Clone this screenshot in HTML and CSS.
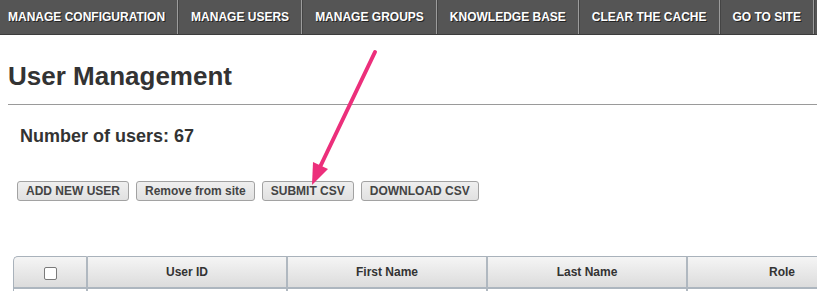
FILE: index.html
```html
<!DOCTYPE html>
<html>
<head>
<title>User Management</title>
<meta charset="UTF-8">
<link rel="stylesheet" href="styles.css">
</head>

<body>
<div class="nav">
    <a class="nav-item first">MANAGE CONFIGURATION</a>
    <a class="nav-item">MANAGE USERS</a>
    <a class="nav-item">MANAGE GROUPS</a>
    <a class="nav-item">KNOWLEDGE BASE</a>
    <a class="nav-item">CLEAR THE CACHE</a>
    <a class="nav-item">GO TO SITE</a>
</div>

<div class="main">
    <h1 class="title">User Management</h1>
    <hr class="rule">

    <div class="count">Number of users: 67</div>

    <div class="actions">
        <button class="btn">ADD NEW USER</button>
        <button class="btn">Remove from site</button>
        <button class="btn">SUBMIT CSV</button>
        <button class="btn">DOWNLOAD CSV</button>
    </div>

    <div class="grid-wrap">
    <table class="grid">
    <tr class="head">
        <th class="col-check"><input type="checkbox" class="check"></th>
        <th class="col">User ID</th>
        <th class="col">First Name</th>
        <th class="col">Last Name</th>
        <th class="col-role">Role</th>
    </tr>
    <tr class="row">
        <td></td><td></td><td></td><td></td><td></td>
    </tr>
    </table>
    </div>
</div>

<!-- annotation arrow pointing at SUBMIT CSV -->
<svg class="arrow" width="817" height="291" viewBox="0 0 817 291">
    <line x1="375" y1="52" x2="320" y2="167" stroke="#ec2f7b" stroke-width="4" stroke-linecap="round"/>
    <polygon points="312,185 313,162 328,169" fill="#ec2f7b"/>
</svg>
</body>
</html>
```

FILE: styles.css
```css
html,body{overflow:hidden;}
body{margin:0;color:#333;background:#fff;font-family:"Liberation Sans",Arial,sans-serif;font-size:12px;}

.nav{display:flex;height:34px;background:#555;border-bottom:1px solid #3c3c3c;}
.nav-item{display:block;padding:0 12px 0 13px;line-height:34px;font-size:12px;font-weight:bold;color:#fff;text-shadow:1px 1px 0 #222;border-right:1px solid #9c9c9c;box-shadow:1px 0 0 #444;cursor:pointer;white-space:nowrap;}
.nav-item.first{padding-left:8px;}

.main{padding:0 0 0 8px;}
.title{margin:26px 0 0;font-size:26px;line-height:30px;font-weight:bold;color:#333;}
.rule{margin:13px 0 0;height:0;border:0;border-top:1px solid #9a9a9a;}

.count{margin:21px 0 0 12px;font-size:18px;line-height:21px;font-weight:bold;color:#333;}

.actions{display:flex;gap:7px;margin:34px 0 0 9px;}
.btn{height:20px;padding:0 8px;font-family:"Liberation Sans",Arial,sans-serif;font-size:12px;font-weight:bold;color:#444;background:linear-gradient(#efefef,#e1e1e1);border:1px solid #a2a2a2;border-radius:3px;cursor:pointer;}

.grid-wrap{margin:55px 0 0 5px;height:35px;overflow:hidden;}
.grid{border-collapse:separate;border-spacing:0;table-layout:fixed;width:864px;}
.grid th,.grid td{padding:0;border-right:2px solid #b0b8c0;}
.grid .head th{height:30px;font-size:12px;font-weight:bold;color:#333;text-align:center;background:linear-gradient(#f5f5f5,#dcdcdc);border-top:1px solid #a9b2bb;border-bottom:2px solid #adb6bf;}
.grid .head th:first-child{border-left:1px solid #a9b2bb;border-top-left-radius:5px;}
.grid .row td{height:30px;}
.grid .row td:first-child{border-left:1px solid #a9b2bb;}
.col-check{width:72px;}
.col{width:198px;}
.col-role{width:188px;}

.check{appearance:none;width:13px;height:13px;margin:3px 0 0;border:1px solid #7a7a7a;border-radius:2px;background:#fff;vertical-align:middle;}

.arrow{position:absolute;left:0;top:0;pointer-events:none;}
```
